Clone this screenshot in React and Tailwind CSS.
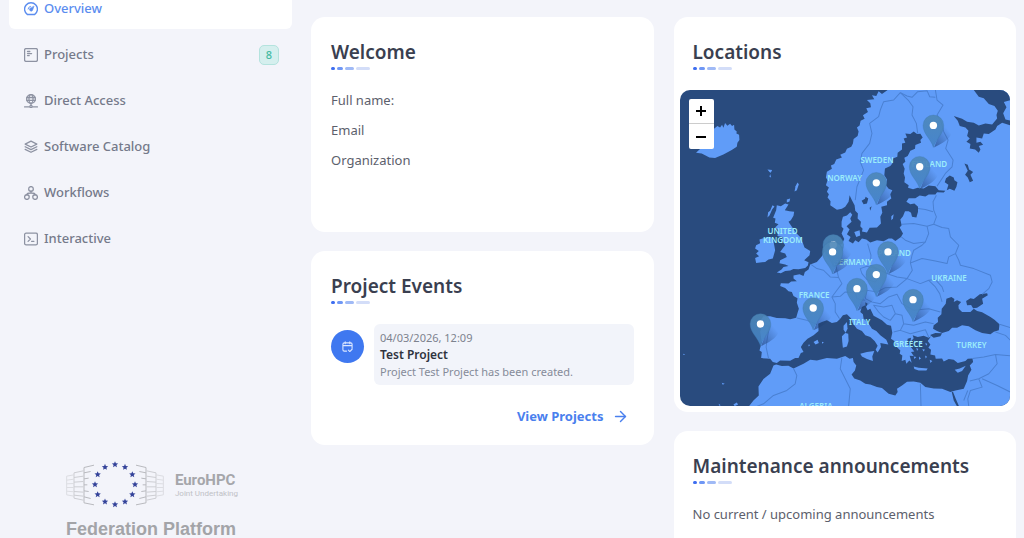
import { ArrowRight } from "lucide-react";

const NAV = [
  { id: "overview", label: "Overview", icon: OverviewIcon, active: true },
  { id: "projects", label: "Projects", icon: ProjectsIcon, badge: 8 },
  { id: "access", label: "Direct Access", icon: AccessIcon },
  { id: "catalog", label: "Software Catalog", icon: CatalogIcon },
  { id: "workflows", label: "Workflows", icon: WorkflowsIcon },
  { id: "interactive", label: "Interactive", icon: InteractiveIcon },
];

const PROFILE = ["Full name:", "Email", "Organization"];

const PINS = [
  [759, 106], [718, 230], [588, 278], [459, 464], [457, 485],
  [623, 485], [588, 553], [530, 595], [698, 628], [399, 653], [241, 701],
];

const COUNTRIES = [
  ["SWEDEN", 590, 218], ["NORWAY", 493, 273], ["FINLAND", 747, 231],
  ["UNITED", 307, 430], ["KINGDOM", 308, 458], ["POLAND", 642, 498],
  ["GERMANY", 517, 523], ["UKRAINE", 806, 573], ["FRANCE", 402, 624],
  ["ITALY", 538, 704], ["GREECE", 683, 770], ["TURKEY", 873, 772],
  ["ALGERIA", 407, 957],
];

const LAND = [
  // Iceland, Faroe, Shetland, Orkney
  "M103 115L112 108 120 112 126 104 130 113 135 99 142 107 150 101 156 108 162 104 163 118 170 124 169 130 177 134 178 150 172 158 170 170 155 180 130 193 105 204 88 202 78 197 65 190 48 188 60 177 30 150 28 133 60 120Z",
  "M262 238L276 240 272 248 268 246ZM270 252L273 262 268 260Z",
  "M352 277L356 282 350 300 343 304 346 288Z",
  "M320 328L330 325 328 334 320 337Z",
  // Great Britain, Hebrides, Ireland
  "M290 345L302 348 315 340 325 343 314 360 328 363 342 365 340 377 332 390 325 395 334 408 348 428 360 440 368 458 373 472 390 482 388 495 372 510 385 516 383 526 375 533 355 537 340 536 330 541 315 542 302 549 290 547 304 538 310 530 325 527 315 523 298 519 300 510 320 500 315 490 300 485 308 474 315 465 305 450 308 440 292 437 295 420 285 412 295 402 284 398 286 385 279 383 288 360Z",
  "M277 345L283 349 276 358 268 376 262 382 264 366 270 362Z",
  "M228 465L240 459 238 448 262 440 274 443 280 452 285 480 278 505 265 508 255 515 228 518 225 503 237 498 228 490 236 482 225 475Z",
  // Europe, Asia and Africa
  "M622 0L605 12 595 4 588 18 575 16 582 28 560 30 570 40 572 52 558 55 563 66 548 76 553 86 541 92 538 106 530 112 535 124 532 138 520 147 518 160 513 170 500 176 495 187 480 194 485 202 468 208 462 222 452 226 455 236 440 245 437 262 442 270 437 285 446 292 440 305 446 312 442 322 451 333 450 345 470 359 485 356 495 350 505 335 508 315 515 330 523 345 525 362 533 370 532 385 542 395 540 408 547 416 545 424 560 427 568 413 590 412 602 400 600 380 606 368 603 350 620 345 620 335 633 325 630 312 636 300 625 296 617 285 620 268 612 255 614 235 630 228 636 220 638 205 651 200 652 188 665 178 665 160 675 158 670 145 680 142 675 130 690 132 700 124 710 132 720 131 727 142 720 150 722 158 705 165 704 176 690 182 682 198 672 203 675 215 667 222 673 236 670 250 674 262 672 276 685 285 683 293 698 297 712 293 730 295 745 286 765 288 775 300 795 302 790 307 770 306 765 313 745 313 735 319 718 316 705 324 685 324 678 335 690 342 702 340 713 350 713 365 708 382 695 380 692 368 685 363 674 363 668 378 660 388 664 405 658 412 668 430 662 440 645 452 635 445 625 445 610 453 590 450 570 457 558 448 545 445 535 456 525 450 518 460 505 452 511 440 500 432 508 418 499 408 514 395 510 385 516 374 510 366 500 376 488 380 484 395 484 410 490 416 484 430 492 446 485 462 465 465 450 470 432 485 425 498 410 515 390 523 385 538 374 545 370 557 358 552 340 556 340 565 350 573 333 574 325 580 302 579 300 587 315 593 325 603 335 605 340 617 352 624 350 637 356 655 352 668 348 682 330 687 315 684 290 683 270 678 250 678 242 690 245 705 240 725 245 755 238 780 245 785 243 803 270 805 278 815 290 818 300 810 330 811 345 803 355 803 362 788 370 785 362 770 370 757 382 745 400 735 415 722 414 700 425 695 440 690 455 698 470 695 480 685 488 675 500 672 512 684 517 698 530 715 545 722 555 735 570 740 583 752 592 766 586 778 592 786 602 770 600 758 612 760 624 762 618 748 600 735 588 722 575 715 562 695 550 685 548 672 540 665 545 650 555 645 562 660 570 655 580 676 605 690 620 703 632 706 636 727 632 745 642 752 645 765 660 780 658 790 666 795 664 812 675 808 678 820 687 810 694 817 688 796 700 797 692 785 702 783 690 768 680 760 682 745 692 742 690 755 700 744 697 735 712 740 730 736 745 742 752 738 742 752 750 762 744 772 752 778 750 792 764 795 766 805 785 804 790 813 805 806 820 808 832 818 855 812 862 805 876 804 878 815 868 825 873 838 863 855 860 872 850 895 825 900 810 905 785 895 760 894 735 890 720 877 700 873 680 874 665 885 650 895 652 905 645 915 625 910 605 893 590 890 570 882 555 880 540 870 522 864 514 852 524 840 528 825 520 815 518 803 508 805 495 797 470 805 440 803 410 810 390 808 370 820 340 834 325 826 305 827 288 822 280 825 270 850 250 866 235 888 236 915 220 930 206 948 990 948 990 0Z",
  // Danish isles and Gotland
  "M522 425L538 420 540 436 528 440Z",
  "M633 378L640 372 638 385 633 390Z",
];

const SEA = [
  // Barents and White Sea
  "M880 0L895 20 910 25 925 42 942 48 952 62 948 75 950 85 935 103 915 100 895 106 880 98 860 95 845 86 820 78 832 92 838 108 855 112 864 122 860 138 868 145 858 155 870 162 868 175 884 178 895 188 900 178 895 168 908 164 900 155 888 158 888 142 905 145 910 130 925 132 945 118 950 108 965 98 990 106 990 92 975 88 968 70 978 52 970 36 990 30 990 0Z",
  // lakes
  "M797 264L808 256 820 262 822 270 831 276 828 290 822 302 808 296 799 300 804 284 793 276Z",
  "M852 220L862 224 866 238 878 246 870 254 878 272 868 276 862 262 854 254 862 242Z",
  "M544 332L554 326 556 320 564 325 560 340 550 342Z",
  "M568 353L574 348 570 362Z",
  // Black Sea, Azov, Marmara
  "M760 705L773 695 772 682 783 672 784 655 796 640 798 625 813 620 822 626 820 635 830 630 842 635 834 645 835 655 845 665 870 665 880 655 890 662 905 666 930 680 942 688 957 702 955 720 940 724 930 732 905 728 885 720 865 708 845 705 830 712 815 712 805 722 785 728 770 722 758 715Z",
  "M857 632L870 624 880 626 898 612 920 609 922 615 905 625 908 640 890 652 878 654 872 644 860 645Z",
  "M749 734L765 728 785 729 780 738 760 742Z",
  "M814 905L818 905 826 925 836 948 830 948 820 930Z",
  "M555 636L562 640 556 652Z",
];

const ISLANDS = [
  "M540 790L560 785 582 782 576 798 578 812 560 806 545 798Z",
  "M485 738L495 728 504 730 505 752 500 768 488 772 486 755Z",
  "M490 706L500 695 502 715 496 727 490 718Z",
  "M700 828L715 832 742 834 738 840 715 840 702 836Z",
  "M823 838L838 834 856 826 845 842 832 847Z",
  "M400 755L412 748 416 758 406 762ZM425 754L431 756 426 760ZM384 763L390 763 386 768Z",
  "M700 750L706 754 702 758ZM718 752L726 756 720 760ZM735 757L741 761 737 766ZM708 772L714 776 710 782ZM726 776L734 778 729 783ZM700 798L708 800 702 806ZM716 798L722 804 716 808ZM734 795L740 799 736 804ZM748 808L756 812 750 818Z",
  "M10 790L16 792 10 794ZM125 877L134 880 128 883ZM116 940L122 944 117 946ZM160 942L170 936 174 942 164 947Z",
];

const BORDERS = [
  "M660 8L640 30 610 35 600 60 595 80 568 100 575 130 568 160 545 190 540 215 550 240 540 265 530 290 525 330",
  "M660 8L685 32 698 50 695 75 708 100 712 130",
  "M660 8L680 18 695 22 712 5 740 2 748 20 765 22 M765 0L770 30 788 45 770 75 782 95 790 125 803 150 796 175 818 210 815 230 795 250 770 288",
  "M768 315L758 335 760 360 768 380 760 402 740 408 700 400 665 402M740 408L745 430 735 455 700 460 675 450 663 440M713 355L735 358 758 365",
  "M760 402L785 412 805 415 810 440 835 465 825 490 805 500 800 520 765 512 725 505 690 518 695 495 700 480 725 465 735 455",
  "M825 490L835 510 840 525 880 535 930 555 935 575 925 595 905 612",
  "M690 518L696 540 680 565 650 560 625 552 600 540 570 525 572 495 562 460M540 535L560 528 585 535 600 555 585 575 560 568 545 550Z",
  "M680 565L720 580 745 570 765 590 778 610 785 635M745 570L765 568 785 590 790 605",
  "M560 600L590 605 615 592 650 590 680 565M560 600L555 625 575 635 600 640 625 620 650 612 665 640 700 660 745 655 780 665",
  "M580 645L610 650 635 645 645 670 630 690 610 680 595 665ZM645 670L665 675 670 700 660 720 640 725M670 700L700 705 735 695 760 700M660 720L690 730 735 718 745 740",
  "M393 523L410 535 430 540 450 560 475 562 485 580 470 600 455 620 465 640 465 665 478 685M475 562L470 540 465 515 460 490M455 620L480 618 495 605 525 608 560 600M525 608L530 625 555 630",
  "M350 683L380 690 410 702M243 705L268 708 262 740 258 770 265 803",
  "M340 834L350 855 345 880 320 900 280 915 250 940 230 948M485 802L480 835 495 865 510 895 505 948M720 880L722 948",
  "M957 702L990 712M945 725L975 735 990 750M876 804L910 800 945 792 990 796M945 792L950 820 925 850 895 865 868 872M895 865L905 890 870 900 862 925 865 948M905 865L950 885 990 905M862 900L850 930",
];

function OverviewIcon(props) {
  return (
    <svg viewBox="0 0 24 24" fill="none" stroke="currentColor" strokeWidth="2.4" strokeLinecap="round" strokeLinejoin="round" {...props}>
      <path d="M6 21.5a11 11 0 1 1 12 0Z" />
      <path d="M17 7.500l-2.500 7a2.600 2.600 0 1 1-4.500-3.500Z" fill="currentColor" strokeWidth="1" />
      <path d="M7 12a5 5 0 0 1 4-4.500" strokeWidth="1.6" />
    </svg>
  );
}

function ProjectsIcon(props) {
  return (
    <svg viewBox="0 0 24 24" fill="none" stroke="currentColor" strokeWidth="2.2" strokeLinecap="round" strokeLinejoin="round" {...props}>
      <rect x="1" y="1" width="22" height="22" rx="2.500" />
      <path d="M6 6h4M6 9.500h7M6 13h3" />
    </svg>
  );
}

function AccessIcon(props) {
  return (
    <svg viewBox="0 0 24 24" fill="none" stroke="currentColor" strokeWidth="2.200" strokeLinecap="round" {...props}>
      <circle cx="12" cy="8.500" r="7.500" />
      <ellipse cx="12" cy="8.500" rx="3.500" ry="7.500" />
      <path d="M5 6h14M5 11h14M12 16v4M1 22h8M15 22h8" />
      <circle cx="12" cy="21.500" r="2" />
    </svg>
  );
}

function CatalogIcon(props) {
  return (
    <svg viewBox="0 0 24 24" fill="none" stroke="currentColor" strokeWidth="2.2" strokeLinecap="round" strokeLinejoin="round" {...props}>
      <path d="M12 2l10 5-10 5L2 7Z" />
      <path d="M2 11.500l10 5 10-5M2 16l10 5 10-5" />
    </svg>
  );
}

function WorkflowsIcon(props) {
  return (
    <svg viewBox="0 0 24 24" fill="none" stroke="currentColor" strokeWidth="2.2" strokeLinecap="round" {...props}>
      <circle cx="12" cy="5" r="4" />
      <circle cx="5" cy="19" r="4" />
      <circle cx="19" cy="19" r="4" />
      <path d="M12 9v3M5 15c0-3 3-3 7-3s7 0 7 3" />
    </svg>
  );
}

function InteractiveIcon(props) {
  return (
    <svg viewBox="0 0 24 24" fill="none" stroke="currentColor" strokeWidth="2.2" strokeLinecap="round" strokeLinejoin="round" {...props}>
      <rect x="1" y="2" width="22" height="20" rx="2.500" />
      <path d="M7 8l4 4-4 4M13 16h4" />
    </svg>
  );
}

function CalendarIcon(props) {
  return (
    <svg viewBox="0 0 24 24" fill="none" stroke="currentColor" strokeWidth="2.4" strokeLinecap="round" strokeLinejoin="round" {...props}>
      <path d="M10 22H5a3 3 0 0 1-3-3V7a3 3 0 0 1 3-3h14a3 3 0 0 1 3 3v9M2 10h20M7 1.500V6M17 1.500V6" />
      <path d="M14 20l3 3 5-5" />
    </svg>
  );
}

function star(cx, cy, r) {
  const pts = [];
  for (let i = 0; i < 10; i++) {
    const a = (Math.PI / 5) * i - Math.PI / 2;
    const d = i % 2 ? r * 0.45 : r;
    pts.push(`${(cx + d * Math.cos(a)).toFixed(1)},${(cy + d * Math.sin(a)).toFixed(1)}`);
  }
  return pts.join(" ");
}

function EuroHpcMark() {
  const stars = Array.from({ length: 12 }, (_, i) => (Math.PI / 6) * i);
  const rack = (
    <g fill="none" strokeWidth="3">
      <path stroke="#b9babf" d="M84 15L54 22V128L84 134M54 38L74 34M54 56L68 54M54 74H64M54 92L68 94M54 110L74 115" />
      <path stroke="#cdced3" d="M52 32L24 38V114L52 120M24 52L52 48M24 66L52 64M24 80H52M24 94L52 96M24 105L52 108" />
      <path stroke="#dcdde2" d="M24 44L2 48V104L24 108M2 60L24 57M2 71L24 70M2 82H24M2 93L24 95" />
    </g>
  );
  return (
    <svg viewBox="0 0 294 146" className="h-[49px] w-[98px]" role="img" aria-label="EuroHPC">
      {rack}
      <g transform="translate(294 0) scale(-1 1)">{rack}</g>
      {stars.map((a) => (
        <polygon key={a} points={star(147 + 60 * Math.sin(a), 73 - 60 * Math.cos(a), 10)} fill="#34439a" />
      ))}
    </svg>
  );
}

function Sidebar() {
  return (
    <aside className="flex w-[301px] shrink-0 flex-col justify-between px-[9px]">
      <nav className="-mt-[11px] flex flex-col gap-[6px]">
        {NAV.map(({ id, label, icon: Icon, badge, active }) => (
          <a
            key={id}
            href={`#${id}`}
            className={`flex h-10 items-center gap-[6px] rounded-md pr-[13px] pl-[15px] text-[13px] font-medium ${
              active ? "bg-white text-[#5b8def]" : "text-[#757a8a]"
            }`}
          >
            <Icon className={active ? "size-[14px]" : "size-[14px] text-[#8d92a2]"} />
            {label}
            {badge && (
              <span className="ml-auto flex size-5 items-center justify-center rounded-[5px] border border-[#b4e3de] bg-[#d5efee] text-[11px] text-[#45bba3]">
                {badge}
              </span>
            )}
          </a>
        ))}
      </nav>
      <div className="-mb-[3px] ml-[57px] w-[172px]">
        <div className="flex items-center justify-between">
          <EuroHpcMark />
          <div className="font-['Roboto',sans-serif] text-[#a5a6aa]">
            <div className="text-[15px] leading-[18px] font-bold">EuroHPC</div>
            <div className="text-[8px] leading-[10px] text-[#c0c1c6]">Joint Undertaking</div>
          </div>
        </div>
        <div className="mt-2 font-['Liberation_Sans',Arial,sans-serif] text-[18px] leading-6 font-bold whitespace-nowrap text-[#a3a4a8]">
          Federation Platform
        </div>
      </div>
    </aside>
  );
}

function CardTitle({ children }) {
  return (
    <div>
      <h2 className="text-[19px] leading-6 font-semibold text-[#3a3f50]">{children}</h2>
      <div className="mt-[3px] flex gap-[2px]">
        <span className="h-[3px] w-1 rounded-full bg-[#3d6df0]" />
        <span className="h-[3px] w-[6px] rounded-full bg-[#6f97f5]" />
        <span className="h-[3px] w-[9px] rounded-full bg-[#a0baf6]" />
        <span className="h-[3px] w-[14px] rounded-full bg-[#d3ddf8]" />
      </div>
    </div>
  );
}

function Card({ className = "", children }) {
  return <section className={`rounded-[14px] bg-white ${className}`}>{children}</section>;
}

function LocationsMap() {
  return (
    <div className="relative overflow-hidden rounded-[10px] bg-[#294b7e]">
      <svg viewBox="0 0 990 948" className="block h-auto w-full" role="img" aria-label="Map of Europe">
        <defs>
          <linearGradient id="pin" x1="0" y1="0" x2="0" y2="1">
            <stop offset="0" stopColor="#4d87b6" />
            <stop offset="1" stopColor="#4382c8" />
          </linearGradient>
          <linearGradient id="shade" x1="0" y1="1" x2="1" y2="0">
            <stop offset="0" stopColor="#1d3d70" stopOpacity="0.6" />
            <stop offset="0.8" stopColor="#1d3d70" stopOpacity="0" />
          </linearGradient>
        </defs>
        <g fill="#609cf8">{LAND.map((d) => <path key={d} d={d} />)}</g>
        <g fill="#294b7e">{SEA.map((d) => <path key={d} d={d} />)}</g>
        <g fill="#609cf8">{ISLANDS.map((d) => <path key={d} d={d} />)}</g>
        <g fill="none" stroke="#4a80d2" strokeWidth="3" strokeLinejoin="round">
          {BORDERS.map((d) => <path key={d} d={d} />)}
        </g>
        <g fill="#9cecfb" fontSize="24" fontWeight="600" textAnchor="middle">
          {COUNTRIES.map(([name, x, y]) => <text key={name} x={x} y={y}>{name}</text>)}
        </g>
        {PINS.map(([x, y]) => (
          <g key={`${x}-${y}`} transform={`translate(${x} ${y})`}>
            <path d="M2 66L26 4C44 -4 62 10 54 26C46 44 20 58 2 66Z" fill="url(#shade)" />
            <path d="M0 66C-6 42 -31 26 -31 0A31 31 0 0 1 31 0C31 26 6 42 0 66Z" fill="url(#pin)" fillOpacity="0.9" stroke="#3d76ac" strokeWidth="1" />
            <circle r="11" fill="#fff" />
          </g>
        ))}
      </svg>
      <div className="absolute top-[9px] left-[9px] flex flex-col overflow-hidden rounded-xs bg-white text-black">
        <button type="button" aria-label="Zoom in" className="flex h-[25px] w-[25px] items-center justify-center border-b border-[#ccc]">
          <svg viewBox="0 0 10 10" className="size-[10px]"><path d="M5 0v10M0 5h10" stroke="currentColor" strokeWidth="2" /></svg>
        </button>
        <button type="button" aria-label="Zoom out" className="flex h-[25px] w-[25px] items-center justify-center">
          <svg viewBox="0 0 10 10" className="size-[10px]"><path d="M0 5h10" stroke="currentColor" strokeWidth="2" /></svg>
        </button>
      </div>
    </div>
  );
}

export default function App() {
  return (
    <div className="flex h-screen overflow-hidden bg-[#f3f4fa] font-['Noto_Sans',sans-serif]">
      <Sidebar />
      <main className="grid min-w-0 flex-1 grid-cols-2 items-start gap-5 pt-[17px] pr-2 pl-[10px]">
        <div className="flex flex-col gap-[19px]">
          <Card className="min-h-[215px] px-5 pt-[23px]">
            <CardTitle>Welcome</CardTitle>
            <div className="mt-5 flex flex-col gap-[10px] text-[13px] leading-5 text-[#5c606c]">
              {PROFILE.map((p) => <p key={p}>{p}</p>)}
            </div>
          </Card>

          <Card className="px-5 pt-[23px] pb-[18px]">
            <CardTitle>Project Events</CardTitle>
            <div className="mt-5 flex gap-[10px]">
              <div className="mt-[6px] flex size-[33px] shrink-0 items-center justify-center rounded-full bg-[#3f78f0] text-[#dbe7ff]">
                <CalendarIcon className="size-[11px]" />
              </div>
              <div className="min-w-0 flex-1 rounded-md bg-[#f2f4fa] px-[6px] py-[5px] text-[11px] leading-[17px]">
                <div className="text-[#7d828e]">04/03/2026, 12:09</div>
                <div className="text-[12px] font-semibold text-[#2f333e]">Test Project</div>
                <div className="text-[#858b99]">Project Test Project has been created.</div>
              </div>
            </div>
            <div className="mt-5 flex justify-end pr-[5px]">
              <a href="#projects" className="flex items-center gap-2 text-[13px] leading-[22px] font-bold text-[#4a80ee]">
                View Projects
                <ArrowRight className="size-[17px]" />
              </a>
            </div>
          </Card>
        </div>

        <div className="flex flex-col gap-[19px]">
          <Card className="px-[6px] pt-[23px] pb-[6px]">
            <div className="mb-5 pl-[13px]">
              <CardTitle>Locations</CardTitle>
            </div>
            <LocationsMap />
          </Card>

          <Card className="px-[19px] pt-[23px] pb-10">
            <CardTitle>Maintenance announcements</CardTitle>
            <p className="mt-5 text-[13px] leading-5 text-[#5c606c]">No current / upcoming announcements</p>
          </Card>
        </div>
      </main>
    </div>
  );
}
